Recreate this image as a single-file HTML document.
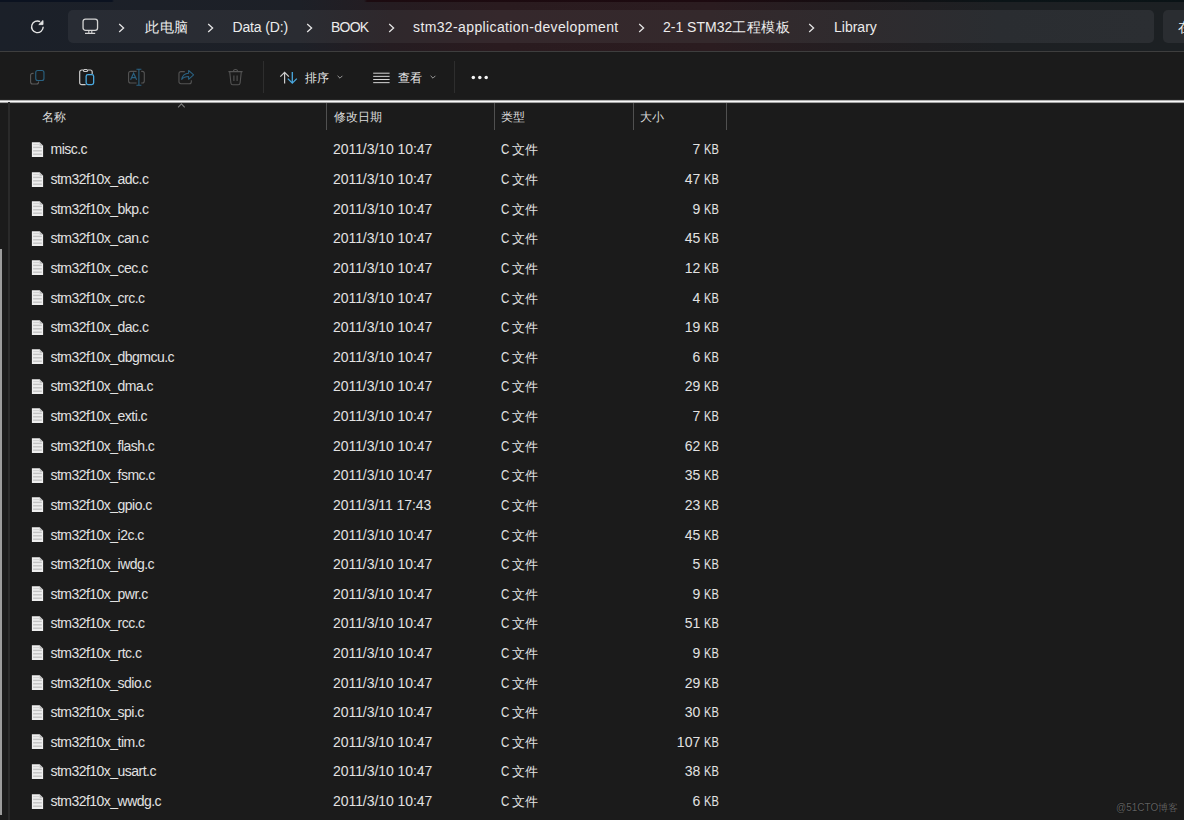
<!DOCTYPE html>
<html><head><meta charset="utf-8">
<style>
html,body{margin:0;padding:0;width:1184px;height:820px;overflow:hidden;background:#1b1b1b;}
body{position:relative;font-family:"Liberation Sans",sans-serif;color:#e6e6e6;}
.hdr{position:absolute;left:0;top:0;width:1184px;height:51px;background:linear-gradient(90deg,#1b2029 0px,#1d2027 300px,#251c21 390px,#2a1b1f 500px,#2b1c20 710px,#231e21 850px,#1d2023 1000px,#1c2023 1184px);}
.topline{position:absolute;left:0;top:0;width:1184px;height:2px;background:linear-gradient(90deg,#0b1220 0px,#0b1220 112px,rgba(0,0,0,0) 114px,rgba(0,0,0,0) 364px,#1c0b10 367px,#1d0a10 700px,#170d11 820px,#111114 900px,#0b1417 1000px,#0a1316 1184px);}
.box{position:absolute;left:68px;top:10px;width:1086px;height:33px;border-radius:5px;background:linear-gradient(90deg,#282c34 0px,#2a2c32 232px,#2f282c 322px,#35282c 432px,#34292c 642px,#2f2b2e 782px,#2a2d31 932px,#2b2e32 1086px);}
.sbox{position:absolute;left:1163px;top:10px;width:40px;height:33px;border-radius:5px;background:#2a2d31;}
.hsep{position:absolute;left:0;top:51px;width:1184px;height:1px;background:#3e3e3e;}
.bc{position:absolute;top:1px;height:53px;line-height:53px;font-size:14px;color:#ececec;white-space:nowrap;}
.chev{position:absolute;}
.tb{position:absolute;left:0;top:52px;width:1184px;height:48px;background:#1b1b1b;}
.vsep{position:absolute;width:1px;background:#2e2e2e;}
.wline{position:absolute;left:0;top:99px;width:1184px;height:5px;background:linear-gradient(#262626 0,#262626 1px,#b0b0b0 1px,#b0b0b0 2px,#f8f8f8 2px,#f8f8f8 3px,#a4a4a4 3px,#a4a4a4 4px,#222 4px);}
.t{position:absolute;height:20px;line-height:20px;font-size:14px;white-space:nowrap;color:#e2e2e2;}
.nm{left:50.5px;letter-spacing:-0.53px;}
.dt{left:333px;letter-spacing:-0.06px;}
.ty{left:500.5px;}
.sz{left:600px;width:118.5px;text-align:right;}
.kb{display:inline-block;width:14.4px;transform:scaleX(0.79);transform-origin:0 0;}
.cj{font-size:12.5px;}
.cc{display:inline-block;width:11.3px;transform:scaleX(0.82);transform-origin:0 0;}
.fi{position:absolute;left:31px;}
.hd{position:absolute;top:107px;height:20px;line-height:20px;font-size:12.4px;color:#dcdcdc;}
.cdiv{position:absolute;top:103px;height:27px;width:1px;background:#505050;}
.lline{position:absolute;left:8px;top:102px;width:2px;height:718px;background:#2a2a2a;}
.thumb{position:absolute;left:0;top:249px;width:2px;height:566px;background:#9c9c9c;}
.wm{position:absolute;left:1116px;top:801px;font-size:10px;color:#606060;text-shadow:0 0 1px #000;}
</style></head><body>
<div class="hdr"></div>
<div class="topline"></div>
<!-- refresh -->
<svg style="position:absolute;left:29px;top:19px" width="17" height="17" viewBox="0 0 17 17"><path d="M14.2 7.8A5.8 5.8 0 1 1 11.1 2.7" fill="none" stroke="#e4e4e4" stroke-width="1.35"/><path d="M14 1.5L14 5.6L9.8 5.6Z" fill="#e4e4e4" stroke="#e4e4e4" stroke-width="0.9" stroke-linejoin="round"/></svg>
<div class="box"></div>
<div class="sbox"></div>
<!-- monitor icon -->
<svg style="position:absolute;left:81px;top:17px" width="18" height="18" viewBox="0 0 18 18"><rect x="2.05" y="2.05" width="14.5" height="11.3" rx="2.4" fill="none" stroke="#d4d4d4" stroke-width="1.3"/><path d="M4 16.4H14.2M7.8 13.6V16.2M10.8 13.6V16.2" stroke="#d4d4d4" stroke-width="1.1" fill="none"/></svg>
<div class="bc" style="left:118px"><svg width="7" height="10" viewBox="0 0 7 10" style="vertical-align:-1px"><path d="M1.2 1L5.6 5L1.2 9" fill="none" stroke="#e6e6e6" stroke-width="1.3"/></svg></div>
<div class="bc" style="left:145px;font-size:14px;letter-spacing:0.6px">此电脑</div>
<div class="bc" style="left:207px"><svg width="7" height="10" viewBox="0 0 7 10" style="vertical-align:-1px"><path d="M1.2 1L5.6 5L1.2 9" fill="none" stroke="#e6e6e6" stroke-width="1.3"/></svg></div>
<div class="bc" style="left:232.5px;letter-spacing:-0.15px">Data (D:)</div>
<div class="bc" style="left:306px"><svg width="7" height="10" viewBox="0 0 7 10" style="vertical-align:-1px"><path d="M1.2 1L5.6 5L1.2 9" fill="none" stroke="#e6e6e6" stroke-width="1.3"/></svg></div>
<div class="bc" style="left:331px;letter-spacing:-0.75px">BOOK</div>
<div class="bc" style="left:388px"><svg width="7" height="10" viewBox="0 0 7 10" style="vertical-align:-1px"><path d="M1.2 1L5.6 5L1.2 9" fill="none" stroke="#e6e6e6" stroke-width="1.3"/></svg></div>
<div class="bc" style="left:413px;letter-spacing:0.38px">stm32-application-development</div>
<div class="bc" style="left:638px"><svg width="7" height="10" viewBox="0 0 7 10" style="vertical-align:-1px"><path d="M1.2 1L5.6 5L1.2 9" fill="none" stroke="#e6e6e6" stroke-width="1.3"/></svg></div>
<div class="bc" style="left:663px">2-1 STM32<span style="font-size:14px;letter-spacing:0.6px">工程模板</span></div>
<div class="bc" style="left:808px"><svg width="7" height="10" viewBox="0 0 7 10" style="vertical-align:-1px"><path d="M1.2 1L5.6 5L1.2 9" fill="none" stroke="#e6e6e6" stroke-width="1.3"/></svg></div>
<div class="bc" style="left:834px">Library</div>
<div class="bc" style="left:1178px;font-size:14px">在</div>
<div class="hsep"></div>
<div class="tb"></div>
<!-- toolbar icons -->
<svg style="position:absolute;left:28px;top:68px" width="18" height="18" viewBox="0 0 18 18"><path d="M5.6 5.4H4.6A2 2 0 0 0 2.6 7.4V14A2 2 0 0 0 4.6 16H8.6A2 2 0 0 0 10.6 14V13.4" fill="none" stroke="#5a5a5a" stroke-width="1.1"/><rect x="7.75" y="2.55" width="8.2" height="9.9" rx="2" fill="none" stroke="#2a6282" stroke-width="1.1"/></svg>
<svg style="position:absolute;left:77px;top:67px" width="20" height="20" viewBox="0 0 20 20"><path d="M8.6 17.7H4.7A2 2 0 0 1 2.7 15.7V5A2 2 0 0 1 4.7 3H6M11 3H13.2A2 2 0 0 1 15.2 5V7" fill="none" stroke="#cdcdcd" stroke-width="1.2"/><rect x="6.45" y="2.45" width="4.1" height="2" rx="1" fill="none" stroke="#cdcdcd" stroke-width="1.1"/><rect x="9.15" y="7.55" width="7.5" height="10.1" rx="1.8" fill="none" stroke="#4aa9e0" stroke-width="1.3"/></svg>
<svg style="position:absolute;left:126px;top:67px" width="20" height="20" viewBox="0 0 20 20"><path d="M10.6 4.4H4.6A2 2 0 0 0 2.6 6.4V14A2 2 0 0 0 4.6 16H10.6M15.2 4.4H16.3A2 2 0 0 1 18.3 6.4V14A2 2 0 0 1 16.3 16H15.2" fill="none" stroke="#545454" stroke-width="1.1"/><path d="M12.9 2.2V18.3M10.4 2.2H15.4M10.4 18.3H15.4" fill="none" stroke="#2a6282" stroke-width="1.1"/><path d="M4.6 12.8L7.6 6.2L10.6 12.8M5.8 10.6H9.4" fill="none" stroke="#2a6282" stroke-width="1.1"/></svg>
<svg style="position:absolute;left:176px;top:67px" width="20" height="20" viewBox="0 0 20 20"><path d="M8.8 4.65H4.95A2 2 0 0 0 2.95 6.65V14.75A2 2 0 0 0 4.95 16.75H13.35A2 2 0 0 0 15.35 14.75V13.2" fill="none" stroke="#545454" stroke-width="1.1"/><path d="M5.7 12.4C6.4 8.6 9 6.4 12.6 6.2V3.4L17.6 7.9L12.6 12.3V9.5C9.4 9.5 7.2 10.4 5.7 12.4Z" fill="none" stroke="#2a6282" stroke-width="1.05" stroke-linejoin="round"/></svg>
<svg style="position:absolute;left:226px;top:67px" width="20" height="20" viewBox="0 0 20 20"><path d="M2.4 4.6H16.6M7.4 4.5A2.1 2 0 0 1 11.6 4.5M3.7 4.8L4.9 16A1.9 1.9 0 0 0 6.8 17.7H12.2A1.9 1.9 0 0 0 14.1 16L15.3 4.8M7.9 8.4V14M11.1 8.4V14" fill="none" stroke="#545454" stroke-width="1.1"/></svg>
<div class="vsep" style="left:263px;top:61px;height:32px"></div>
<svg style="position:absolute;left:279px;top:70px" width="20" height="15" viewBox="0 0 20 15"><path d="M5.6 13.6V2.3M1.3 6.6L5.6 2.3L9.9 6.6" fill="none" stroke="#cdcdcd" stroke-width="1.2"/><path d="M13.3 1.9V13.1M8.8 8.6L13.3 13.1L17.8 8.6" fill="none" stroke="#4aa9e0" stroke-width="1.3"/></svg>
<div class="bc" style="left:305px;top:53px;height:50px;line-height:50px;font-size:12.4px;letter-spacing:0.4px">排序</div>
<svg style="position:absolute;left:336px;top:74px" width="8" height="6" viewBox="0 0 8 6"><path d="M1.6 1.8L4 4.2L6.4 1.8" fill="none" stroke="#9a9a9a" stroke-width="1"/></svg>
<svg style="position:absolute;left:372px;top:71px" width="19" height="14" viewBox="0 0 19 14"><path d="M1.2 2.2H17.6M1.2 5.35H17.6M1.2 8.5H17.6M1.2 11.65H17.6" fill="none" stroke="#d6d6d6" stroke-width="1.0"/></svg>
<div class="bc" style="left:398px;top:53px;height:50px;line-height:50px;font-size:12.4px;letter-spacing:0.4px">查看</div>
<svg style="position:absolute;left:429px;top:74px" width="8" height="6" viewBox="0 0 8 6"><path d="M1.6 1.8L4 4.2L6.4 1.8" fill="none" stroke="#9a9a9a" stroke-width="1"/></svg>
<div class="vsep" style="left:454px;top:61px;height:32px"></div>
<svg style="position:absolute;left:470px;top:74px" width="20" height="6" viewBox="0 0 20 6"><circle cx="3.3" cy="3.5" r="1.75" fill="#f4f4f4"/><circle cx="9.8" cy="3.5" r="1.75" fill="#f4f4f4"/><circle cx="16.2" cy="3.5" r="1.75" fill="#f4f4f4"/></svg>
<div class="wline"></div>
<div class="lline"></div>
<div class="thumb"></div>
<!-- header -->
<svg style="position:absolute;left:176px;top:102px" width="11" height="7" viewBox="0 0 11 7"><path d="M2.1 5.4L5.4 1.9L8.7 5.4" fill="none" stroke="#7a7a7a" stroke-width="1.1"/></svg>
<div class="hd" style="left:42px">名称</div>
<div class="cdiv" style="left:326px"></div>
<div class="hd" style="left:333.5px">修改日期</div>
<div class="cdiv" style="left:494px"></div>
<div class="hd" style="left:500.5px">类型</div>
<div class="cdiv" style="left:633px"></div>
<div class="hd" style="left:640px">大小</div>
<div class="cdiv" style="left:726px"></div>
<svg class="fi" style="top:140.90px" width="13" height="17" viewBox="0 0 13 17"><path d="M0.9 1.2H8.6L12.1 4.7V15.9H0.9Z" fill="#eeeeee"/><path d="M8.6 1.2V4.7H12.1" fill="#b8b8b8"/><rect x="2.1" y="3.0" width="6" height="1.1" fill="#d4d4d4"/><rect x="2.1" y="5.7" width="8.7" height="1.4" fill="#c4c4c4"/><rect x="2.1" y="9.1" width="8.7" height="1.4" fill="#c4c4c4"/><rect x="2.1" y="12.5" width="8.7" height="1.4" fill="#c4c4c4"/></svg>
<div class="t nm" style="top:139.47px">misc.c</div><div class="t dt" style="top:139.47px">2011/3/10 10:47</div><div class="t ty" style="top:139.47px"><span class="cc">C</span><span class="cj">文件</span></div><div class="t sz" style="top:139.47px">7 <span class="kb">KB</span></div>
<svg class="fi" style="top:170.52px" width="13" height="17" viewBox="0 0 13 17"><path d="M0.9 1.2H8.6L12.1 4.7V15.9H0.9Z" fill="#eeeeee"/><path d="M8.6 1.2V4.7H12.1" fill="#b8b8b8"/><rect x="2.1" y="3.0" width="6" height="1.1" fill="#d4d4d4"/><rect x="2.1" y="5.7" width="8.7" height="1.4" fill="#c4c4c4"/><rect x="2.1" y="9.1" width="8.7" height="1.4" fill="#c4c4c4"/><rect x="2.1" y="12.5" width="8.7" height="1.4" fill="#c4c4c4"/></svg>
<div class="t nm" style="top:169.09px">stm32f10x_adc.c</div><div class="t dt" style="top:169.09px">2011/3/10 10:47</div><div class="t ty" style="top:169.09px"><span class="cc">C</span><span class="cj">文件</span></div><div class="t sz" style="top:169.09px">47 <span class="kb">KB</span></div>
<svg class="fi" style="top:200.14px" width="13" height="17" viewBox="0 0 13 17"><path d="M0.9 1.2H8.6L12.1 4.7V15.9H0.9Z" fill="#eeeeee"/><path d="M8.6 1.2V4.7H12.1" fill="#b8b8b8"/><rect x="2.1" y="3.0" width="6" height="1.1" fill="#d4d4d4"/><rect x="2.1" y="5.7" width="8.7" height="1.4" fill="#c4c4c4"/><rect x="2.1" y="9.1" width="8.7" height="1.4" fill="#c4c4c4"/><rect x="2.1" y="12.5" width="8.7" height="1.4" fill="#c4c4c4"/></svg>
<div class="t nm" style="top:198.71px">stm32f10x_bkp.c</div><div class="t dt" style="top:198.71px">2011/3/10 10:47</div><div class="t ty" style="top:198.71px"><span class="cc">C</span><span class="cj">文件</span></div><div class="t sz" style="top:198.71px">9 <span class="kb">KB</span></div>
<svg class="fi" style="top:229.76px" width="13" height="17" viewBox="0 0 13 17"><path d="M0.9 1.2H8.6L12.1 4.7V15.9H0.9Z" fill="#eeeeee"/><path d="M8.6 1.2V4.7H12.1" fill="#b8b8b8"/><rect x="2.1" y="3.0" width="6" height="1.1" fill="#d4d4d4"/><rect x="2.1" y="5.7" width="8.7" height="1.4" fill="#c4c4c4"/><rect x="2.1" y="9.1" width="8.7" height="1.4" fill="#c4c4c4"/><rect x="2.1" y="12.5" width="8.7" height="1.4" fill="#c4c4c4"/></svg>
<div class="t nm" style="top:228.33px">stm32f10x_can.c</div><div class="t dt" style="top:228.33px">2011/3/10 10:47</div><div class="t ty" style="top:228.33px"><span class="cc">C</span><span class="cj">文件</span></div><div class="t sz" style="top:228.33px">45 <span class="kb">KB</span></div>
<svg class="fi" style="top:259.38px" width="13" height="17" viewBox="0 0 13 17"><path d="M0.9 1.2H8.6L12.1 4.7V15.9H0.9Z" fill="#eeeeee"/><path d="M8.6 1.2V4.7H12.1" fill="#b8b8b8"/><rect x="2.1" y="3.0" width="6" height="1.1" fill="#d4d4d4"/><rect x="2.1" y="5.7" width="8.7" height="1.4" fill="#c4c4c4"/><rect x="2.1" y="9.1" width="8.7" height="1.4" fill="#c4c4c4"/><rect x="2.1" y="12.5" width="8.7" height="1.4" fill="#c4c4c4"/></svg>
<div class="t nm" style="top:257.95px">stm32f10x_cec.c</div><div class="t dt" style="top:257.95px">2011/3/10 10:47</div><div class="t ty" style="top:257.95px"><span class="cc">C</span><span class="cj">文件</span></div><div class="t sz" style="top:257.95px">12 <span class="kb">KB</span></div>
<svg class="fi" style="top:289.00px" width="13" height="17" viewBox="0 0 13 17"><path d="M0.9 1.2H8.6L12.1 4.7V15.9H0.9Z" fill="#eeeeee"/><path d="M8.6 1.2V4.7H12.1" fill="#b8b8b8"/><rect x="2.1" y="3.0" width="6" height="1.1" fill="#d4d4d4"/><rect x="2.1" y="5.7" width="8.7" height="1.4" fill="#c4c4c4"/><rect x="2.1" y="9.1" width="8.7" height="1.4" fill="#c4c4c4"/><rect x="2.1" y="12.5" width="8.7" height="1.4" fill="#c4c4c4"/></svg>
<div class="t nm" style="top:287.57px">stm32f10x_crc.c</div><div class="t dt" style="top:287.57px">2011/3/10 10:47</div><div class="t ty" style="top:287.57px"><span class="cc">C</span><span class="cj">文件</span></div><div class="t sz" style="top:287.57px">4 <span class="kb">KB</span></div>
<svg class="fi" style="top:318.62px" width="13" height="17" viewBox="0 0 13 17"><path d="M0.9 1.2H8.6L12.1 4.7V15.9H0.9Z" fill="#eeeeee"/><path d="M8.6 1.2V4.7H12.1" fill="#b8b8b8"/><rect x="2.1" y="3.0" width="6" height="1.1" fill="#d4d4d4"/><rect x="2.1" y="5.7" width="8.7" height="1.4" fill="#c4c4c4"/><rect x="2.1" y="9.1" width="8.7" height="1.4" fill="#c4c4c4"/><rect x="2.1" y="12.5" width="8.7" height="1.4" fill="#c4c4c4"/></svg>
<div class="t nm" style="top:317.19px">stm32f10x_dac.c</div><div class="t dt" style="top:317.19px">2011/3/10 10:47</div><div class="t ty" style="top:317.19px"><span class="cc">C</span><span class="cj">文件</span></div><div class="t sz" style="top:317.19px">19 <span class="kb">KB</span></div>
<svg class="fi" style="top:348.24px" width="13" height="17" viewBox="0 0 13 17"><path d="M0.9 1.2H8.6L12.1 4.7V15.9H0.9Z" fill="#eeeeee"/><path d="M8.6 1.2V4.7H12.1" fill="#b8b8b8"/><rect x="2.1" y="3.0" width="6" height="1.1" fill="#d4d4d4"/><rect x="2.1" y="5.7" width="8.7" height="1.4" fill="#c4c4c4"/><rect x="2.1" y="9.1" width="8.7" height="1.4" fill="#c4c4c4"/><rect x="2.1" y="12.5" width="8.7" height="1.4" fill="#c4c4c4"/></svg>
<div class="t nm" style="top:346.81px">stm32f10x_dbgmcu.c</div><div class="t dt" style="top:346.81px">2011/3/10 10:47</div><div class="t ty" style="top:346.81px"><span class="cc">C</span><span class="cj">文件</span></div><div class="t sz" style="top:346.81px">6 <span class="kb">KB</span></div>
<svg class="fi" style="top:377.86px" width="13" height="17" viewBox="0 0 13 17"><path d="M0.9 1.2H8.6L12.1 4.7V15.9H0.9Z" fill="#eeeeee"/><path d="M8.6 1.2V4.7H12.1" fill="#b8b8b8"/><rect x="2.1" y="3.0" width="6" height="1.1" fill="#d4d4d4"/><rect x="2.1" y="5.7" width="8.7" height="1.4" fill="#c4c4c4"/><rect x="2.1" y="9.1" width="8.7" height="1.4" fill="#c4c4c4"/><rect x="2.1" y="12.5" width="8.7" height="1.4" fill="#c4c4c4"/></svg>
<div class="t nm" style="top:376.43px">stm32f10x_dma.c</div><div class="t dt" style="top:376.43px">2011/3/10 10:47</div><div class="t ty" style="top:376.43px"><span class="cc">C</span><span class="cj">文件</span></div><div class="t sz" style="top:376.43px">29 <span class="kb">KB</span></div>
<svg class="fi" style="top:407.48px" width="13" height="17" viewBox="0 0 13 17"><path d="M0.9 1.2H8.6L12.1 4.7V15.9H0.9Z" fill="#eeeeee"/><path d="M8.6 1.2V4.7H12.1" fill="#b8b8b8"/><rect x="2.1" y="3.0" width="6" height="1.1" fill="#d4d4d4"/><rect x="2.1" y="5.7" width="8.7" height="1.4" fill="#c4c4c4"/><rect x="2.1" y="9.1" width="8.7" height="1.4" fill="#c4c4c4"/><rect x="2.1" y="12.5" width="8.7" height="1.4" fill="#c4c4c4"/></svg>
<div class="t nm" style="top:406.05px">stm32f10x_exti.c</div><div class="t dt" style="top:406.05px">2011/3/10 10:47</div><div class="t ty" style="top:406.05px"><span class="cc">C</span><span class="cj">文件</span></div><div class="t sz" style="top:406.05px">7 <span class="kb">KB</span></div>
<svg class="fi" style="top:437.10px" width="13" height="17" viewBox="0 0 13 17"><path d="M0.9 1.2H8.6L12.1 4.7V15.9H0.9Z" fill="#eeeeee"/><path d="M8.6 1.2V4.7H12.1" fill="#b8b8b8"/><rect x="2.1" y="3.0" width="6" height="1.1" fill="#d4d4d4"/><rect x="2.1" y="5.7" width="8.7" height="1.4" fill="#c4c4c4"/><rect x="2.1" y="9.1" width="8.7" height="1.4" fill="#c4c4c4"/><rect x="2.1" y="12.5" width="8.7" height="1.4" fill="#c4c4c4"/></svg>
<div class="t nm" style="top:435.67px">stm32f10x_flash.c</div><div class="t dt" style="top:435.67px">2011/3/10 10:47</div><div class="t ty" style="top:435.67px"><span class="cc">C</span><span class="cj">文件</span></div><div class="t sz" style="top:435.67px">62 <span class="kb">KB</span></div>
<svg class="fi" style="top:466.72px" width="13" height="17" viewBox="0 0 13 17"><path d="M0.9 1.2H8.6L12.1 4.7V15.9H0.9Z" fill="#eeeeee"/><path d="M8.6 1.2V4.7H12.1" fill="#b8b8b8"/><rect x="2.1" y="3.0" width="6" height="1.1" fill="#d4d4d4"/><rect x="2.1" y="5.7" width="8.7" height="1.4" fill="#c4c4c4"/><rect x="2.1" y="9.1" width="8.7" height="1.4" fill="#c4c4c4"/><rect x="2.1" y="12.5" width="8.7" height="1.4" fill="#c4c4c4"/></svg>
<div class="t nm" style="top:465.29px">stm32f10x_fsmc.c</div><div class="t dt" style="top:465.29px">2011/3/10 10:47</div><div class="t ty" style="top:465.29px"><span class="cc">C</span><span class="cj">文件</span></div><div class="t sz" style="top:465.29px">35 <span class="kb">KB</span></div>
<svg class="fi" style="top:496.34px" width="13" height="17" viewBox="0 0 13 17"><path d="M0.9 1.2H8.6L12.1 4.7V15.9H0.9Z" fill="#eeeeee"/><path d="M8.6 1.2V4.7H12.1" fill="#b8b8b8"/><rect x="2.1" y="3.0" width="6" height="1.1" fill="#d4d4d4"/><rect x="2.1" y="5.7" width="8.7" height="1.4" fill="#c4c4c4"/><rect x="2.1" y="9.1" width="8.7" height="1.4" fill="#c4c4c4"/><rect x="2.1" y="12.5" width="8.7" height="1.4" fill="#c4c4c4"/></svg>
<div class="t nm" style="top:494.91px">stm32f10x_gpio.c</div><div class="t dt" style="top:494.91px">2011/3/11 17:43</div><div class="t ty" style="top:494.91px"><span class="cc">C</span><span class="cj">文件</span></div><div class="t sz" style="top:494.91px">23 <span class="kb">KB</span></div>
<svg class="fi" style="top:525.96px" width="13" height="17" viewBox="0 0 13 17"><path d="M0.9 1.2H8.6L12.1 4.7V15.9H0.9Z" fill="#eeeeee"/><path d="M8.6 1.2V4.7H12.1" fill="#b8b8b8"/><rect x="2.1" y="3.0" width="6" height="1.1" fill="#d4d4d4"/><rect x="2.1" y="5.7" width="8.7" height="1.4" fill="#c4c4c4"/><rect x="2.1" y="9.1" width="8.7" height="1.4" fill="#c4c4c4"/><rect x="2.1" y="12.5" width="8.7" height="1.4" fill="#c4c4c4"/></svg>
<div class="t nm" style="top:524.53px">stm32f10x_i2c.c</div><div class="t dt" style="top:524.53px">2011/3/10 10:47</div><div class="t ty" style="top:524.53px"><span class="cc">C</span><span class="cj">文件</span></div><div class="t sz" style="top:524.53px">45 <span class="kb">KB</span></div>
<svg class="fi" style="top:555.58px" width="13" height="17" viewBox="0 0 13 17"><path d="M0.9 1.2H8.6L12.1 4.7V15.9H0.9Z" fill="#eeeeee"/><path d="M8.6 1.2V4.7H12.1" fill="#b8b8b8"/><rect x="2.1" y="3.0" width="6" height="1.1" fill="#d4d4d4"/><rect x="2.1" y="5.7" width="8.7" height="1.4" fill="#c4c4c4"/><rect x="2.1" y="9.1" width="8.7" height="1.4" fill="#c4c4c4"/><rect x="2.1" y="12.5" width="8.7" height="1.4" fill="#c4c4c4"/></svg>
<div class="t nm" style="top:554.15px">stm32f10x_iwdg.c</div><div class="t dt" style="top:554.15px">2011/3/10 10:47</div><div class="t ty" style="top:554.15px"><span class="cc">C</span><span class="cj">文件</span></div><div class="t sz" style="top:554.15px">5 <span class="kb">KB</span></div>
<svg class="fi" style="top:585.20px" width="13" height="17" viewBox="0 0 13 17"><path d="M0.9 1.2H8.6L12.1 4.7V15.9H0.9Z" fill="#eeeeee"/><path d="M8.6 1.2V4.7H12.1" fill="#b8b8b8"/><rect x="2.1" y="3.0" width="6" height="1.1" fill="#d4d4d4"/><rect x="2.1" y="5.7" width="8.7" height="1.4" fill="#c4c4c4"/><rect x="2.1" y="9.1" width="8.7" height="1.4" fill="#c4c4c4"/><rect x="2.1" y="12.5" width="8.7" height="1.4" fill="#c4c4c4"/></svg>
<div class="t nm" style="top:583.77px">stm32f10x_pwr.c</div><div class="t dt" style="top:583.77px">2011/3/10 10:47</div><div class="t ty" style="top:583.77px"><span class="cc">C</span><span class="cj">文件</span></div><div class="t sz" style="top:583.77px">9 <span class="kb">KB</span></div>
<svg class="fi" style="top:614.82px" width="13" height="17" viewBox="0 0 13 17"><path d="M0.9 1.2H8.6L12.1 4.7V15.9H0.9Z" fill="#eeeeee"/><path d="M8.6 1.2V4.7H12.1" fill="#b8b8b8"/><rect x="2.1" y="3.0" width="6" height="1.1" fill="#d4d4d4"/><rect x="2.1" y="5.7" width="8.7" height="1.4" fill="#c4c4c4"/><rect x="2.1" y="9.1" width="8.7" height="1.4" fill="#c4c4c4"/><rect x="2.1" y="12.5" width="8.7" height="1.4" fill="#c4c4c4"/></svg>
<div class="t nm" style="top:613.39px">stm32f10x_rcc.c</div><div class="t dt" style="top:613.39px">2011/3/10 10:47</div><div class="t ty" style="top:613.39px"><span class="cc">C</span><span class="cj">文件</span></div><div class="t sz" style="top:613.39px">51 <span class="kb">KB</span></div>
<svg class="fi" style="top:644.44px" width="13" height="17" viewBox="0 0 13 17"><path d="M0.9 1.2H8.6L12.1 4.7V15.9H0.9Z" fill="#eeeeee"/><path d="M8.6 1.2V4.7H12.1" fill="#b8b8b8"/><rect x="2.1" y="3.0" width="6" height="1.1" fill="#d4d4d4"/><rect x="2.1" y="5.7" width="8.7" height="1.4" fill="#c4c4c4"/><rect x="2.1" y="9.1" width="8.7" height="1.4" fill="#c4c4c4"/><rect x="2.1" y="12.5" width="8.7" height="1.4" fill="#c4c4c4"/></svg>
<div class="t nm" style="top:643.01px">stm32f10x_rtc.c</div><div class="t dt" style="top:643.01px">2011/3/10 10:47</div><div class="t ty" style="top:643.01px"><span class="cc">C</span><span class="cj">文件</span></div><div class="t sz" style="top:643.01px">9 <span class="kb">KB</span></div>
<svg class="fi" style="top:674.06px" width="13" height="17" viewBox="0 0 13 17"><path d="M0.9 1.2H8.6L12.1 4.7V15.9H0.9Z" fill="#eeeeee"/><path d="M8.6 1.2V4.7H12.1" fill="#b8b8b8"/><rect x="2.1" y="3.0" width="6" height="1.1" fill="#d4d4d4"/><rect x="2.1" y="5.7" width="8.7" height="1.4" fill="#c4c4c4"/><rect x="2.1" y="9.1" width="8.7" height="1.4" fill="#c4c4c4"/><rect x="2.1" y="12.5" width="8.7" height="1.4" fill="#c4c4c4"/></svg>
<div class="t nm" style="top:672.63px">stm32f10x_sdio.c</div><div class="t dt" style="top:672.63px">2011/3/10 10:47</div><div class="t ty" style="top:672.63px"><span class="cc">C</span><span class="cj">文件</span></div><div class="t sz" style="top:672.63px">29 <span class="kb">KB</span></div>
<svg class="fi" style="top:703.68px" width="13" height="17" viewBox="0 0 13 17"><path d="M0.9 1.2H8.6L12.1 4.7V15.9H0.9Z" fill="#eeeeee"/><path d="M8.6 1.2V4.7H12.1" fill="#b8b8b8"/><rect x="2.1" y="3.0" width="6" height="1.1" fill="#d4d4d4"/><rect x="2.1" y="5.7" width="8.7" height="1.4" fill="#c4c4c4"/><rect x="2.1" y="9.1" width="8.7" height="1.4" fill="#c4c4c4"/><rect x="2.1" y="12.5" width="8.7" height="1.4" fill="#c4c4c4"/></svg>
<div class="t nm" style="top:702.25px">stm32f10x_spi.c</div><div class="t dt" style="top:702.25px">2011/3/10 10:47</div><div class="t ty" style="top:702.25px"><span class="cc">C</span><span class="cj">文件</span></div><div class="t sz" style="top:702.25px">30 <span class="kb">KB</span></div>
<svg class="fi" style="top:733.30px" width="13" height="17" viewBox="0 0 13 17"><path d="M0.9 1.2H8.6L12.1 4.7V15.9H0.9Z" fill="#eeeeee"/><path d="M8.6 1.2V4.7H12.1" fill="#b8b8b8"/><rect x="2.1" y="3.0" width="6" height="1.1" fill="#d4d4d4"/><rect x="2.1" y="5.7" width="8.7" height="1.4" fill="#c4c4c4"/><rect x="2.1" y="9.1" width="8.7" height="1.4" fill="#c4c4c4"/><rect x="2.1" y="12.5" width="8.7" height="1.4" fill="#c4c4c4"/></svg>
<div class="t nm" style="top:731.87px">stm32f10x_tim.c</div><div class="t dt" style="top:731.87px">2011/3/10 10:47</div><div class="t ty" style="top:731.87px"><span class="cc">C</span><span class="cj">文件</span></div><div class="t sz" style="top:731.87px">107 <span class="kb">KB</span></div>
<svg class="fi" style="top:762.92px" width="13" height="17" viewBox="0 0 13 17"><path d="M0.9 1.2H8.6L12.1 4.7V15.9H0.9Z" fill="#eeeeee"/><path d="M8.6 1.2V4.7H12.1" fill="#b8b8b8"/><rect x="2.1" y="3.0" width="6" height="1.1" fill="#d4d4d4"/><rect x="2.1" y="5.7" width="8.7" height="1.4" fill="#c4c4c4"/><rect x="2.1" y="9.1" width="8.7" height="1.4" fill="#c4c4c4"/><rect x="2.1" y="12.5" width="8.7" height="1.4" fill="#c4c4c4"/></svg>
<div class="t nm" style="top:761.49px">stm32f10x_usart.c</div><div class="t dt" style="top:761.49px">2011/3/10 10:47</div><div class="t ty" style="top:761.49px"><span class="cc">C</span><span class="cj">文件</span></div><div class="t sz" style="top:761.49px">38 <span class="kb">KB</span></div>
<svg class="fi" style="top:792.54px" width="13" height="17" viewBox="0 0 13 17"><path d="M0.9 1.2H8.6L12.1 4.7V15.9H0.9Z" fill="#eeeeee"/><path d="M8.6 1.2V4.7H12.1" fill="#b8b8b8"/><rect x="2.1" y="3.0" width="6" height="1.1" fill="#d4d4d4"/><rect x="2.1" y="5.7" width="8.7" height="1.4" fill="#c4c4c4"/><rect x="2.1" y="9.1" width="8.7" height="1.4" fill="#c4c4c4"/><rect x="2.1" y="12.5" width="8.7" height="1.4" fill="#c4c4c4"/></svg>
<div class="t nm" style="top:791.11px">stm32f10x_wwdg.c</div><div class="t dt" style="top:791.11px">2011/3/10 10:47</div><div class="t ty" style="top:791.11px"><span class="cc">C</span><span class="cj">文件</span></div><div class="t sz" style="top:791.11px">6 <span class="kb">KB</span></div>
<div class="wm">@51CTO博客</div>
</body></html>
